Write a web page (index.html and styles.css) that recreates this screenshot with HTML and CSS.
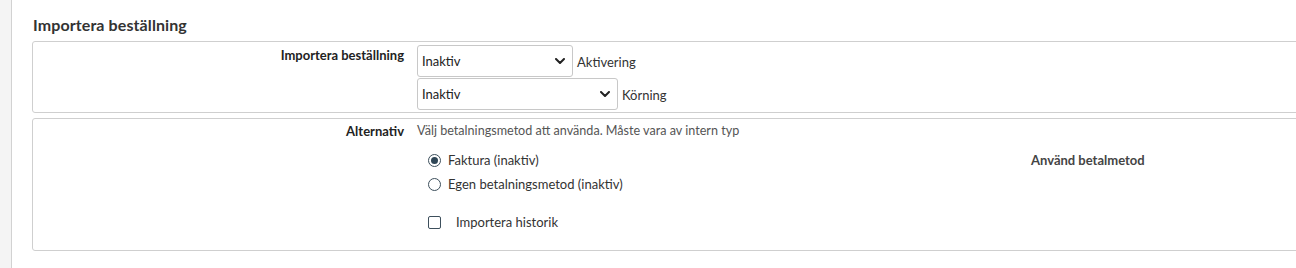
FILE: index.html
```html
<!DOCTYPE html>
<html lang="sv">
<head>
<meta charset="utf-8">
<title>Importera beställning</title>
<link rel="stylesheet" href="styles.css">
</head>
<body>
<div class="page">
  <aside class="rail"></aside>
  <main class="main">
    <h2 class="title">Importera beställning</h2>

    <section class="box box-first">
      <div class="label">Importera beställning</div>
      <div class="field">
        <div class="select-row">
          <div class="select sel-a"><span>Inaktiv</span><svg class="chev" viewBox="0 0 10 6" width="10" height="6"><path d="M1 1l4 4 4-4" fill="none" stroke="#222" stroke-width="2" stroke-linecap="round" stroke-linejoin="round"/></svg></div>
          <span class="after">Aktivering</span>
        </div>
        <div class="select-row">
          <div class="select sel-b"><span>Inaktiv</span><svg class="chev" viewBox="0 0 10 6" width="10" height="6"><path d="M1 1l4 4 4-4" fill="none" stroke="#222" stroke-width="2" stroke-linecap="round" stroke-linejoin="round"/></svg></div>
          <span class="after">Körning</span>
        </div>
      </div>
    </section>

    <section class="box box-second">
      <div class="label">Alternativ</div>
      <div class="field">
        <div class="desc">Välj betalningsmetod att använda. Måste vara av intern typ</div>
        <div class="opts">
          <div class="radios">
            <label class="opt"><span class="radio checked"></span><span>Faktura (inaktiv)</span></label>
            <label class="opt"><span class="radio"></span><span>Egen betalningsmetod (inaktiv)</span></label>
          </div>
          <div class="use">Använd betalmetod</div>
        </div>
        <label class="check-row"><span class="checkbox"></span><span>Importera historik</span></label>
      </div>
    </section>
  </main>
</div>
</body>
</html>
```

FILE: styles.css
```css
* { box-sizing: border-box; }
html, body { margin: 0; padding: 0; background: #fff; }
body {
  font-family: Lato, "Liberation Sans", sans-serif;
  color: #333;
  font-size: 13px;
}
.page {
  display: flex;
  height: 268px;
  overflow: hidden;
}
.rail {
  width: 12px;
  flex: none;
  background: #f4f4f4;
  border-right: 1px solid #d2d2d2;
}
.main {
  flex: 1;
  padding: 15px 0 0 20px;
  margin-right: -12px;
}
.title {
  margin: 0 0 6px 1px;
  font-size: 16px;
  line-height: 20px;
  font-weight: 700;
  letter-spacing: 0.1px;
  color: #333;
}
.box {
  border: 1px solid #cfcfcf;
  border-radius: 3px;
  display: grid;
  grid-template-columns: 371px 1fr;
  column-gap: 13px;
}
.box-first {
  padding: 3px 0 2px;
  margin-bottom: 5px;
}
.label {
  text-align: right;
  font-weight: 700;
  font-size: 13px;
  line-height: 16px;
  color: #222;
  padding-top: 1px;
}
.box-first .label { padding-top: 2px; }
.select-row {
  display: flex;
  align-items: center;
  gap: 4px;
  margin-bottom: 1px;
}
.select-row:last-child { margin-bottom: 0; }
.select {
  height: 32px;
  border: 1px solid #c8c8c8;
  border-radius: 3px;
  background: #fff;
  display: flex;
  align-items: center;
  justify-content: space-between;
  padding: 0 7px 0 4px;
  font-size: 13px;
  color: #222;
}
.sel-a { width: 156px; }
.sel-b { width: 201px; }
.chev { display: block; }
.after { font-size: 13px; color: #333; padding-top: 2px; }
.box-second {
  padding: 3px 0 19px;
}
.desc {
  font-size: 12.6px;
  line-height: 16px;
  color: #555;
  padding-top: 1px;
}
.opts {
  display: grid;
  grid-template-columns: 614px 1fr;
  margin-top: 13px;
}
.radios {
  display: flex;
  flex-direction: column;
  gap: 7px;
  padding-left: 11px;
}
.opt {
  display: flex;
  align-items: center;
  gap: 7px;
  font-size: 13px;
  line-height: 17px;
  color: #333;
}
.radio {
  width: 13px;
  height: 13px;
  border: 1px solid #3d4f5c;
  border-radius: 50%;
  flex: none;
  display: flex;
  align-items: center;
  justify-content: center;
}
.radio.checked::after {
  content: "";
  width: 7px;
  height: 7px;
  border-radius: 50%;
  background: #2f4656;
}
.use {
  font-size: 13px;
  font-weight: 700;
  color: #444;
  line-height: 17px;
}
.check-row {
  display: flex;
  align-items: center;
  gap: 15px;
  padding-left: 11px;
  margin-top: 21px;
  font-size: 13px;
  line-height: 17px;
  color: #333;
}
.checkbox {
  width: 13px;
  height: 13px;
  border: 1px solid #3d4f5c;
  border-radius: 2px;
  flex: none;
}
```
